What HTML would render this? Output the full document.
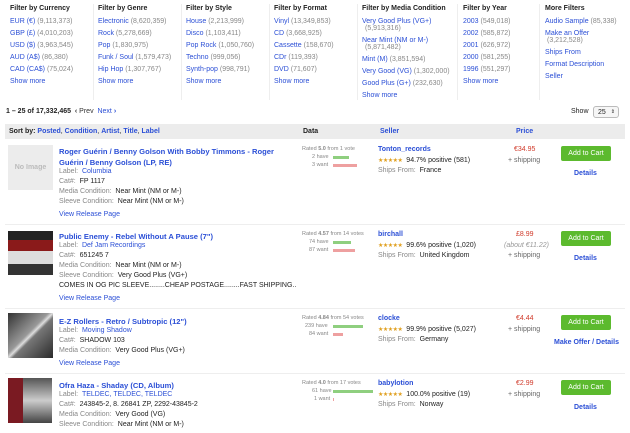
<!DOCTYPE html>
<html><head><meta charset="utf-8"><style>
*{margin:0;padding:0;box-sizing:border-box}
body{width:630px;height:433px;background:#fff;font-family:"Liberation Sans",Arial,sans-serif;font-size:7px;color:#222;position:relative;overflow:hidden}
.a{position:absolute;white-space:nowrap}
a,.l{color:#2b4fd6;text-decoration:none}
.h{font-weight:bold;color:#222}
.c{color:#888}
.g{color:#888}
.b{font-weight:bold}
.t{font-size:7.6px}
.vs{position:absolute;width:1px;background:#eee;top:4px;height:96px}
.hr{position:absolute;left:5px;width:620px;height:1px;background:#eee}
.btn{position:absolute;left:561px;width:50px;height:15px;background:#5cba2e;border-radius:2px;color:#fff;font-size:7px;text-align:center;line-height:15px}
.st{color:#e0a020;font-size:6px;letter-spacing:-0.5px}
.bar{position:absolute;height:3px}
.red{color:#d03a2a}
.img{position:absolute;left:8px;width:45px;height:45px}
</style></head><body>
<div class="vs" style="left:93px"></div><div class="vs" style="left:181px"></div><div class="vs" style="left:269px"></div><div class="vs" style="left:357px"></div><div class="vs" style="left:457px"></div><div class="vs" style="left:539px"></div>

<div class="a h" style="left:10px;top:5px">Filter by Currency</div>
<div class="a" style="left:10px;top:18px"><a>EUR (€)</a> <span class="c">(9,113,373)</span></div>
<div class="a" style="left:10px;top:30px"><a>GBP (£)</a> <span class="c">(4,010,203)</span></div>
<div class="a" style="left:10px;top:42px"><a>USD ($)</a> <span class="c">(3,963,545)</span></div>
<div class="a" style="left:10px;top:54px"><a>AUD (A$)</a> <span class="c">(86,380)</span></div>
<div class="a" style="left:10px;top:66px"><a>CAD (CA$)</a> <span class="c">(75,024)</span></div>
<div class="a" style="left:10px;top:78px"><a>Show more</a></div>

<div class="a h" style="left:98px;top:5px">Filter by Genre</div>
<div class="a" style="left:98px;top:18px"><a>Electronic</a> <span class="c">(8,620,359)</span></div>
<div class="a" style="left:98px;top:30px"><a>Rock</a> <span class="c">(5,278,669)</span></div>
<div class="a" style="left:98px;top:42px"><a>Pop</a> <span class="c">(1,830,975)</span></div>
<div class="a" style="left:98px;top:54px"><a>Funk / Soul</a> <span class="c">(1,579,473)</span></div>
<div class="a" style="left:98px;top:66px"><a>Hip Hop</a> <span class="c">(1,307,767)</span></div>
<div class="a" style="left:98px;top:78px"><a>Show more</a></div>

<div class="a h" style="left:186px;top:5px">Filter by Style</div>
<div class="a" style="left:186px;top:18px"><a>House</a> <span class="c">(2,213,999)</span></div>
<div class="a" style="left:186px;top:30px"><a>Disco</a> <span class="c">(1,103,411)</span></div>
<div class="a" style="left:186px;top:42px"><a>Pop Rock</a> <span class="c">(1,050,760)</span></div>
<div class="a" style="left:186px;top:54px"><a>Techno</a> <span class="c">(999,056)</span></div>
<div class="a" style="left:186px;top:66px"><a>Synth-pop</a> <span class="c">(998,791)</span></div>
<div class="a" style="left:186px;top:78px"><a>Show more</a></div>

<div class="a h" style="left:274px;top:5px">Filter by Format</div>
<div class="a" style="left:274px;top:18px"><a>Vinyl</a> <span class="c">(13,349,853)</span></div>
<div class="a" style="left:274px;top:30px"><a>CD</a> <span class="c">(3,668,925)</span></div>
<div class="a" style="left:274px;top:42px"><a>Cassette</a> <span class="c">(158,670)</span></div>
<div class="a" style="left:274px;top:54px"><a>CDr</a> <span class="c">(119,393)</span></div>
<div class="a" style="left:274px;top:66px"><a>DVD</a> <span class="c">(71,607)</span></div>
<div class="a" style="left:274px;top:78px"><a>Show more</a></div>

<div class="a h" style="left:362px;top:5px">Filter by Media Condition</div>
<div class="a" style="left:362px;top:18px"><a>Very Good Plus (VG+)</a></div>
<div class="a c" style="left:365px;top:25px">(5,913,316)</div>
<div class="a" style="left:362px;top:37px"><a>Near Mint (NM or M-)</a></div>
<div class="a c" style="left:365px;top:44px">(5,871,482)</div>
<div class="a" style="left:362px;top:56px"><a>Mint (M)</a> <span class="c">(3,851,594)</span></div>
<div class="a" style="left:362px;top:68px"><a>Very Good (VG)</a> <span class="c">(1,302,000)</span></div>
<div class="a" style="left:362px;top:80px"><a>Good Plus (G+)</a> <span class="c">(232,630)</span></div>
<div class="a" style="left:362px;top:92px"><a>Show more</a></div>

<div class="a h" style="left:463px;top:5px">Filter by Year</div>
<div class="a" style="left:463px;top:18px"><a>2003</a> <span class="c">(549,018)</span></div>
<div class="a" style="left:463px;top:30px"><a>2002</a> <span class="c">(585,872)</span></div>
<div class="a" style="left:463px;top:42px"><a>2001</a> <span class="c">(626,972)</span></div>
<div class="a" style="left:463px;top:54px"><a>2000</a> <span class="c">(581,255)</span></div>
<div class="a" style="left:463px;top:66px"><a>1996</a> <span class="c">(551,297)</span></div>
<div class="a" style="left:463px;top:78px"><a>Show more</a></div>

<div class="a h" style="left:545px;top:5px">More Filters</div>
<div class="a" style="left:545px;top:18px"><a>Audio Sample</a> <span class="c">(85,338)</span></div>
<div class="a" style="left:545px;top:30px"><a>Make an Offer</a></div>
<div class="a c" style="left:547px;top:37px">(3,212,528)</div>
<div class="a" style="left:545px;top:49px"><a>Ships From</a></div>
<div class="a" style="left:545px;top:61px"><a>Format Description</a></div>
<div class="a" style="left:545px;top:73px"><a>Seller</a></div>

<div class="a" style="left:6px;top:108px"><b>1 – 25 of 17,332,465</b> &nbsp;<span style="color:#333"><b>‹</b> Prev</span> &nbsp;<a>Next <b>›</b></a></div>
<div class="a" style="left:571px;top:108px">Show</div>
<div class="a" style="left:593px;top:106px;width:26px;height:12px;border:1px solid #bbb;border-radius:3px;background:#f6f6f6;padding:2px 0 0 4px;font-size:7px">25 <span style="font-size:5px;position:absolute;right:3px;top:2px">⇕</span></div>

<div class="a" style="left:5px;top:124px;width:620px;height:15px;background:#ececec"></div>
<div class="a" style="left:9px;top:128px"><b>Sort by:</b> <a class="b">Posted</a>, <a class="b">Condition</a>, <a class="b">Artist</a>, <a class="b">Title</a>, <a class="b">Label</a></div>
<div class="a b" style="left:303px;top:128px">Data</div>
<div class="a b l" style="left:380px;top:128px">Seller</div>
<div class="a b l" style="left:516px;top:128px">Price</div>

<!-- Row 1 -->
<div class="img" style="top:145px;background:#ececec;color:#bbb;font-size:7px;font-weight:bold;text-align:center;line-height:45px">No Image</div>
<div class="a b l t" style="left:59px;top:147px;line-height:10.5px">Roger Guérin / Benny Golson With Bobby Timmons - Roger<br>Guérin / Benny Golson (LP, RE)</div>
<div class="a" style="left:59px;top:168px"><span class="g">Label:</span> &nbsp;<a>Columbia</a></div>
<div class="a" style="left:59px;top:178px"><span class="g">Cat#:</span> &nbsp;FP 1117</div>
<div class="a" style="left:59px;top:188px"><span class="g">Media Condition:</span> &nbsp;Near Mint (NM or M-)</div>
<div class="a" style="left:59px;top:198px"><span class="g">Sleeve Condition:</span> &nbsp;Near Mint (NM or M-)</div>
<div class="a l" style="left:59px;top:211px">View Release Page</div>
<div class="a c" style="left:302px;top:146px;font-size:5.5px">Rated <b>5.0</b> from 1 vote</div>
<div class="a c" style="left:312px;top:154px;font-size:5.5px">2 have</div><div class="bar" style="left:333px;top:156px;width:16px;background:#8fcf7f"></div>
<div class="a c" style="left:312px;top:162px;font-size:5.5px">3 want</div><div class="bar" style="left:333px;top:164px;width:24px;background:#eea0a0"></div>
<div class="a b l" style="left:378px;top:146px">Tonton_records</div>
<div class="a" style="left:378px;top:157px"><span class="st">★★★★★</span> &nbsp;94.7% positive (581)</div>
<div class="a" style="left:378px;top:167px"><span class="g">Ships From:</span> &nbsp;France</div>
<div class="a red" style="left:514px;top:146px">€34.95</div>
<div class="a" style="left:508px;top:157px;color:#666">+ shipping</div>
<div class="btn" style="top:146px">Add to Cart</div>
<div class="a b l" style="left:574px;top:170px">Details</div>
<div class="hr" style="top:224px"></div>

<!-- Row 2 -->
<div class="img" style="top:231px;height:44px;background:linear-gradient(#222 0 20%,#8a1a1a 20% 45%,#ddd 45% 75%,#333 75%)"></div>
<div class="a b l t" style="left:59px;top:232px">Public Enemy - Rebel Without A Pause (7")</div>
<div class="a" style="left:59px;top:242px"><span class="g">Label:</span> &nbsp;<a>Def Jam Recordings</a></div>
<div class="a" style="left:59px;top:252px"><span class="g">Cat#:</span> &nbsp;651245 7</div>
<div class="a" style="left:59px;top:262px"><span class="g">Media Condition:</span> &nbsp;Near Mint (NM or M-)</div>
<div class="a" style="left:59px;top:272px"><span class="g">Sleeve Condition:</span> &nbsp;Very Good Plus (VG+)</div>
<div class="a" style="left:59px;top:282px">COMES IN OG PIC SLEEVE........CHEAP POSTAGE........FAST SHIPPING..</div>
<div class="a l" style="left:59px;top:295px">View Release Page</div>
<div class="a c" style="left:302px;top:231px;font-size:5.5px">Rated <b>4.57</b> from 14 votes</div>
<div class="a c" style="left:309px;top:239px;font-size:5.5px">74 have</div><div class="bar" style="left:333px;top:241px;width:18px;background:#8fcf7f"></div>
<div class="a c" style="left:309px;top:247px;font-size:5.5px">87 want</div><div class="bar" style="left:333px;top:249px;width:22px;background:#eea0a0"></div>
<div class="a b l" style="left:378px;top:231px">birchall</div>
<div class="a" style="left:378px;top:242px"><span class="st">★★★★★</span> &nbsp;99.6% positive (1,020)</div>
<div class="a" style="left:378px;top:252px"><span class="g">Ships From:</span> &nbsp;United Kingdom</div>
<div class="a red" style="left:516px;top:231px">£8.99</div>
<div class="a" style="left:504px;top:242px;color:#999;font-style:italic">(about €11.22)</div>
<div class="a" style="left:508px;top:252px;color:#666">+ shipping</div>
<div class="btn" style="top:231px">Add to Cart</div>
<div class="a b l" style="left:574px;top:255px">Details</div>
<div class="hr" style="top:308px"></div>

<!-- Row 3 -->
<div class="img" style="top:313px;background:linear-gradient(135deg,#333,#999 45%,#ddd 50%,#777 55%,#2a2a2a)"></div>
<div class="a b l t" style="left:59px;top:317px">E-Z Rollers - Retro / Subtropic (12")</div>
<div class="a" style="left:59px;top:327px"><span class="g">Label:</span> &nbsp;<a>Moving Shadow</a></div>
<div class="a" style="left:59px;top:337px"><span class="g">Cat#:</span> &nbsp;SHADOW 103</div>
<div class="a" style="left:59px;top:347px"><span class="g">Media Condition:</span> &nbsp;Very Good Plus (VG+)</div>
<div class="a l" style="left:59px;top:360px">View Release Page</div>
<div class="a c" style="left:302px;top:315px;font-size:5.5px">Rated <b>4.84</b> from 54 votes</div>
<div class="a c" style="left:305px;top:323px;font-size:5.5px">239 have</div><div class="bar" style="left:333px;top:325px;width:30px;background:#8fcf7f"></div>
<div class="a c" style="left:309px;top:331px;font-size:5.5px">84 want</div><div class="bar" style="left:333px;top:333px;width:10px;background:#eea0a0"></div>
<div class="a b l" style="left:378px;top:315px">clocke</div>
<div class="a" style="left:378px;top:326px"><span class="st">★★★★★</span> &nbsp;99.9% positive (5,027)</div>
<div class="a" style="left:378px;top:336px"><span class="g">Ships From:</span> &nbsp;Germany</div>
<div class="a red" style="left:516px;top:315px">€4.44</div>
<div class="a" style="left:508px;top:326px;color:#666">+ shipping</div>
<div class="btn" style="top:315px">Add to Cart</div>
<div class="a b l" style="left:554px;top:339px">Make Offer / Details</div>
<div class="hr" style="top:373px"></div>

<!-- Row 4 -->
<div class="img" style="top:378px;left:8px;width:15px;height:45px;background:#7a1a22"></div>
<div class="img" style="top:378px;left:23px;width:29px;height:45px;background:linear-gradient(#555,#ccc 50%,#444)"></div>
<div class="a b l t" style="left:59px;top:381px">Ofra Haza - Shaday (CD, Album)</div>
<div class="a" style="left:59px;top:391px"><span class="g">Label:</span> &nbsp;<a>TELDEC, TELDEC, TELDEC</a></div>
<div class="a" style="left:59px;top:401px"><span class="g">Cat#:</span> &nbsp;243845-2, 8. 26841 ZP, 2292-43845-2</div>
<div class="a" style="left:59px;top:411px"><span class="g">Media Condition:</span> &nbsp;Very Good (VG)</div>
<div class="a" style="left:59px;top:421px"><span class="g">Sleeve Condition:</span> &nbsp;Near Mint (NM or M-)</div>
<div class="a c" style="left:302px;top:380px;font-size:5.5px">Rated <b>4.0</b> from 17 votes</div>
<div class="a c" style="left:312px;top:388px;font-size:5.5px">61 have</div><div class="bar" style="left:333px;top:390px;width:40px;background:#8fcf7f"></div>
<div class="a c" style="left:314px;top:396px;font-size:5.5px">1 want</div><div class="bar" style="left:333px;top:398px;width:1px;background:#eea0a0"></div>
<div class="a b l" style="left:378px;top:380px">babylotion</div>
<div class="a" style="left:378px;top:391px"><span class="st">★★★★★</span> &nbsp;100.0% positive (19)</div>
<div class="a" style="left:378px;top:401px"><span class="g">Ships From:</span> &nbsp;Norway</div>
<div class="a red" style="left:516px;top:380px">€2.99</div>
<div class="a" style="left:508px;top:391px;color:#666">+ shipping</div>
<div class="btn" style="top:380px">Add to Cart</div>
<div class="a b l" style="left:574px;top:404px">Details</div>
</body></html>
